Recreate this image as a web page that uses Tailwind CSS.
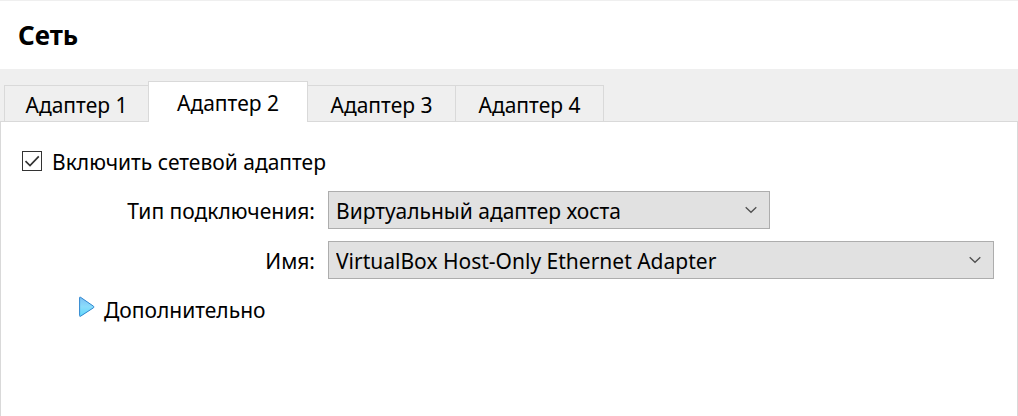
<!DOCTYPE html>
<html lang="ru">
<head>
<meta charset="utf-8">
<meta name="viewport" content="width=device-width, initial-scale=1">
<title>Сеть</title>
<script src="https://cdn.jsdelivr.net/npm/@tailwindcss/browser@4"></script>
</head>
<body class="flex min-h-screen flex-col bg-[#efefef] font-[Tahoma,'Noto_Sans',sans-serif] text-[21px] leading-7 text-black">
  <header class="mt-px flex h-17 items-center bg-white px-[18px]">
    <h1 class="text-[26px] font-bold">Сеть</h1>
  </header>

  <div role="tablist" aria-label="Адаптеры" class="relative mt-3 -mb-px flex items-end pl-1">
    <button type="button" role="tab" id="tab1" aria-selected="false" class="h-[37px] w-36 border border-r-0 border-[#d9d9d9] bg-[#efefef] pt-0.5">Адаптер 1</button>
    <button type="button" role="tab" id="tab2" aria-selected="true" aria-controls="panel" class="h-[41px] w-40 border border-b-0 border-[#d9d9d9] bg-white pt-0.5">Адаптер 2</button>
    <button type="button" role="tab" id="tab3" aria-selected="false" class="h-[37px] w-[148px] border border-l-0 border-[#d9d9d9] bg-[#efefef] pt-0.5">Адаптер 3</button>
    <button type="button" role="tab" id="tab4" aria-selected="false" class="h-[37px] w-[148px] border border-l-0 border-[#d9d9d9] bg-[#efefef] pt-0.5">Адаптер 4</button>
  </div>

  <main id="panel" role="tabpanel" aria-labelledby="tab2" class="flex-1 border border-b-0 border-[#d9d9d9] bg-white pt-6 pr-[23px] pl-[21px]">
    <label class="flex items-center gap-[10px]">
      <span class="grid size-5 place-items-center">
        <input type="checkbox" checked class="peer col-start-1 row-start-1 size-5 appearance-none border border-[#333] bg-white">
        <svg class="pointer-events-none invisible col-start-1 row-start-1 size-5 peer-checked:visible" viewBox="0 0 20 20" fill="none" stroke="#333" stroke-width="1.7" aria-hidden="true"><path d="M3.5 10.2 8 14.5 16.8 5.3"/></svg>
      </span>
      <span class="pt-0.5">Включить сетевой адаптер</span>
    </label>

    <div class="mt-[15px] grid grid-cols-[293px_1fr] items-center gap-x-[13px] gap-y-3">
      <label for="type" class="pt-0.5 text-right">Тип подключения:</label>
      <div class="grid max-w-[442px] items-center">
        <select id="type" class="col-start-1 row-start-1 h-[38px] w-full appearance-none border border-[#adadad] bg-[#e1e1e1] pt-0.5 pr-10 pl-[7px]">
          <option>Виртуальный адаптер хоста</option>
        </select>
        <svg class="pointer-events-none col-start-1 row-start-1 mr-[13px] h-2 w-3 justify-self-end" viewBox="0 0 12 8" fill="none" stroke="#505050" stroke-width="1.3" aria-hidden="true"><path d="M.7 1.2 6 6.3l5.3-5.1"/></svg>
      </div>
      <label for="name" class="pt-0.5 text-right">Имя:</label>
      <div class="grid items-center">
        <select id="name" class="col-start-1 row-start-1 h-[38px] w-full appearance-none border border-[#adadad] bg-[#e1e1e1] pt-0.5 pr-10 pl-[7px]">
          <option>VirtualBox Host-Only Ethernet Adapter</option>
        </select>
        <svg class="pointer-events-none col-start-1 row-start-1 mr-[13px] h-2 w-3 justify-self-end" viewBox="0 0 12 8" fill="none" stroke="#505050" stroke-width="1.3" aria-hidden="true"><path d="M.7 1.2 6 6.3l5.3-5.1"/></svg>
      </div>
    </div>

    <button type="button" aria-expanded="false" class="mt-[17px] ml-[57px] flex items-start gap-[9px]">
      <svg class="h-[22px] w-4" viewBox="0 0 16 22" aria-hidden="true">
        <defs><linearGradient id="arrow" x1="0" y1="0" x2="0" y2="1"><stop offset="0" stop-color="#7cc0f4"/><stop offset=".5" stop-color="#8bdcfb"/><stop offset="1" stop-color="#5fd8fb"/></linearGradient></defs>
        <path d="M.6 1.8Q.6.6 1.6 1.3L14.6 10.3Q15.4 11 14.6 11.7L1.6 20.2Q.6 20.8.6 19.6Z" fill="url(#arrow)" stroke="#2f86cf"/>
      </svg>
      <span>Дополнительно</span>
    </button>
  </main>
</body>
</html>
